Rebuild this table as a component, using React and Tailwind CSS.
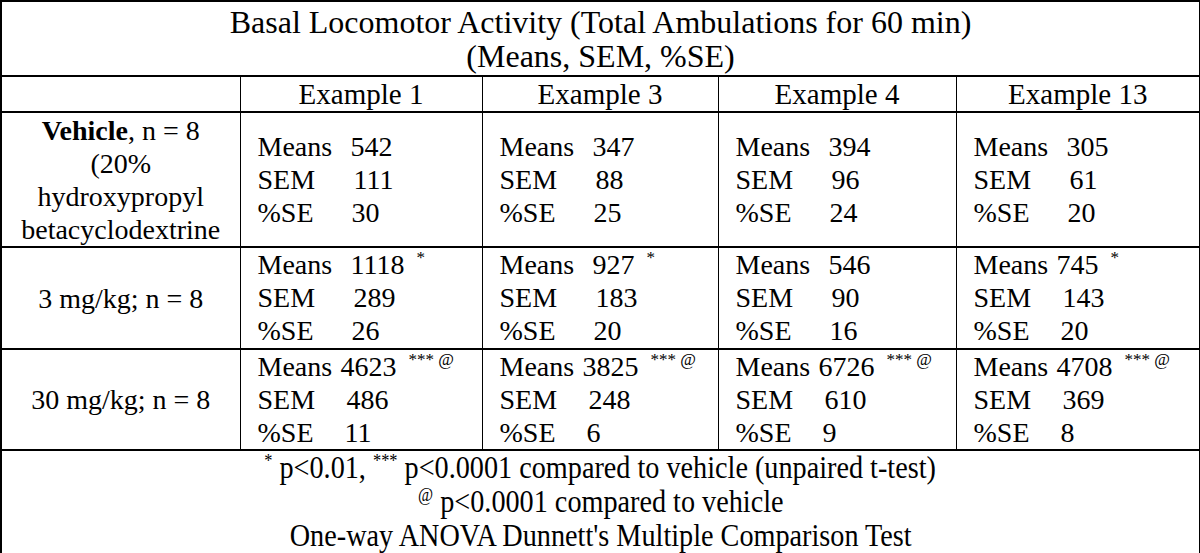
import React from "react";

const examples = ["Example 1", "Example 3", "Example 4", "Example 13"];

// each cell: [means, sem, se, superscript, narrow]
const rows = [
  {
    label: "vehicle",
    height: "h-[135px]",
    cells: [
      ["542", "111", "30", "", false],
      ["347", "88", "25", "", false],
      ["394", "96", "24", "", false],
      ["305", "61", "20", "", false],
    ],
  },
  {
    label: "3 mg/kg; n = 8",
    height: "h-[102px]",
    cells: [
      ["1118", "289", "26", "*", false],
      ["927", "183", "20", "*", false],
      ["546", "90", "16", "", false],
      ["745", "143", "20", "*", true],
    ],
  },
  {
    label: "30 mg/kg; n = 8",
    height: "h-[101px]",
    cells: [
      ["4623", "486", "11", "*** @", true],
      ["3825", "248", "6", "*** @", true],
      ["6726", "610", "9", "*** @", true],
      ["4708", "369", "8", "*** @", true],
    ],
  },
];

function Stats({ means, sem, se, sup, narrow }) {
  return (
    <div className="pl-[17px] text-left leading-[33px]">
      <div className="whitespace-nowrap">
        <span className={`inline-block ${narrow ? "w-[83px]" : "w-[93px]"}`}>Means</span>
        {means}
        {sup && (
          <span className="ml-3 align-top text-[17px] leading-[20px] whitespace-pre">{sup}</span>
        )}
      </div>
      <div>
        <span className={`inline-block ${narrow ? "w-[89px]" : "w-[96px]"}`}>SEM</span>
        {sem}
      </div>
      <div>
        <span className={`inline-block ${narrow ? "w-[87px]" : "w-[94px]"}`}>%SE</span>
        {se}
      </div>
    </div>
  );
}

export default function App() {
  return (
    <div className="w-[1200px] h-[553px] bg-white text-black font-['Liberation_Serif','Times_New_Roman',serif] text-[28px]">
      <table className="w-[1199px] table-fixed border-collapse border-2 border-black">
        <colgroup>
          <col className="w-[239px]" />
          <col className="w-[242px]" />
          <col className="w-[236px]" />
          <col className="w-[238px]" />
          <col className="w-[244px]" />
        </colgroup>
        <tbody>
          <tr className="h-[75px]">
            <td colSpan="5" className="border-2 border-black text-center text-[32px] leading-[34px] p-0">
              Basal Locomotor Activity (Total Ambulations for 60 min)
              <br />
              (Means, SEM, %SE)
            </td>
          </tr>

          <tr className="h-[36px]">
            <td className="border-x border-y-2 border-black p-0" />
            {examples.map(e => (
              <td key={e} className="border-x border-y-2 border-black text-center text-[29px] leading-[33px] p-0">
                {e}
              </td>
            ))}
          </tr>

          {rows.map(r => (
            <tr key={r.label} className={r.height}>
              <td className="border-x border-y-2 border-black text-center align-middle leading-[33px] p-0">
                {r.label === "vehicle" ? (
                  <>
                    <b>Vehicle</b>, n = 8
                    <br />
                    (20%
                    <br />
                    hydroxypropyl
                    <br />
                    betacyclodextrine
                  </>
                ) : (
                  r.label
                )}
              </td>
              {r.cells.map((c, i) => (
                <td
                  key={i}
                  className={`border-x border-y-2 border-black p-0 ${r.label === "vehicle" ? "align-middle" : "align-top"}`}
                >
                  <Stats means={c[0]} sem={c[1]} se={c[2]} sup={c[3]} narrow={c[4]} />
                </td>
              ))}
            </tr>
          ))}

          {/* footnotes, condensed like the source */}
          <tr className="h-[104px]">
            <td colSpan="5" className="border-2 border-black text-center p-0 text-[31px] leading-[34px]">
              <div className="inline-block scale-x-[0.91] whitespace-nowrap">
                <span className="align-top text-[18px] leading-[20px]">*</span> p&lt;0.01,{" "}
                <span className="align-top text-[18px] leading-[20px]">***</span> p&lt;0.0001 compared to vehicle (unpaired t-test)
              </div>
              <br />
              <div className="inline-block scale-x-[0.91] whitespace-nowrap">
                <span className="align-top text-[18px] leading-[20px]">@</span> p&lt;0.0001 compared to vehicle
              </div>
              <br />
              <div className="inline-block scale-x-[0.91] whitespace-nowrap">
                One-way ANOVA Dunnett's Multiple Comparison Test
              </div>
            </td>
          </tr>
        </tbody>
      </table>
    </div>
  );
}
